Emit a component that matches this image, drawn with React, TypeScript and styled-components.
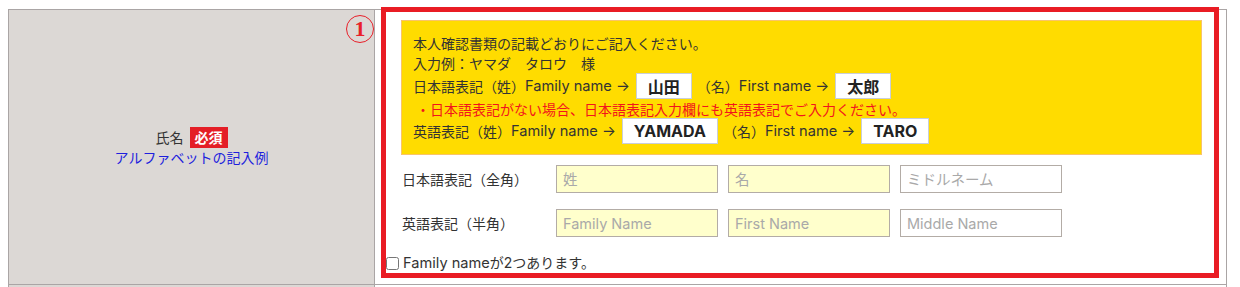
import styled, { createGlobalStyle } from 'styled-components';

const GlobalStyle = createGlobalStyle`
  body {
    margin: 0;
    background: #fff;
    color: #333;
    font-family: Inter, "Noto Sans CJK JP", sans-serif;
    font-size: 14px;
  }
`;

const Page = styled.div`
  padding: 9px 0 0 8px;
`;

const Table = styled.div`
  width: 1219px;
  box-sizing: border-box;
  border: 1px solid #aaa5a5;
  border-bottom: none;
`;

const Row = styled.div<{ $minHeight?: number }>`
  display: grid;
  grid-template-columns: 366px 1fr;
  border-bottom: 1px solid #aaa5a5;
  min-height: ${(p) => (p.$minHeight ? `${p.$minHeight}px` : 'auto')};
`;

const HeadCell = styled.div`
  position: relative;
  display: flex;
  flex-direction: column;
  align-items: center;
  justify-content: center;
  background: #dcd8d5;
  border-right: 1px solid #aaa5a5;
`;

const BodyCell = styled.div`
  position: relative;
  padding: 10px 7px 11px 7px;
`;

const NameLine = styled.div`
  display: flex;
  align-items: center;
  gap: 6px;
  height: 21px;
`;

const Required = styled.span`
  display: inline-block;
  height: 21px;
  line-height: 21px;
  padding: 0 5px;
  background: #e41e26;
  color: #fff;
  font-weight: 700;
`;

const SampleLink = styled.a`
  color: #1f1fdd;
  text-decoration: none;
  line-height: 20px;
`;

const Marker = styled.span`
  position: absolute;
  top: 5px;
  right: 0;
  width: 28px;
  height: 28px;
  box-sizing: border-box;
  border: 1.5px solid #e8202a;
  border-radius: 50%;
  display: flex;
  align-items: center;
  justify-content: center;
  color: #e8202a;
  font-family: "Liberation Serif", serif;
  font-weight: 700;
  font-size: 22px;
  line-height: 1;
`;

const Highlight = styled.div`
  position: absolute;
  left: 6px;
  top: -3px;
  width: 838px;
  height: 271px;
  box-sizing: border-box;
  border: 5px solid #e91c24;
  pointer-events: none;
`;

const Notice = styled.div`
  margin: 0 17px 0 19px;
  padding: 12px 12px 10px 11px;
  background: #ffdc00;
  border: 1px solid #f9c46a;
`;

const NoticeLine = styled.div<{ $h: number; $warn?: boolean }>`
  display: flex;
  align-items: center;
  height: ${(p) => p.$h}px;
  white-space: pre;
  color: ${(p) => (p.$warn ? '#f2141c' : '#333')};
  padding-left: ${(p) => (p.$warn ? '3px' : '0')};
`;

// latin runs read a little larger than the CJK text next to them
const Latin = styled.span`
  font-size: 14.6px;
`;

const NameBox = styled.span`
  display: inline-flex;
  align-items: center;
  height: 26px;
  box-sizing: border-box;
  padding: 0 11px;
  margin: 0 5px 0 6px;
  background: #fff;
  border: 1px solid #c9ced8;
  color: #222;
  font-size: 16px;
  font-weight: 700;
`;

const FormRow = styled.div<{ $top: number }>`
  display: flex;
  align-items: center;
  gap: 10px;
  margin-top: ${(p) => p.$top}px;
  padding-left: 20px;
`;

const FieldLabel = styled.span`
  width: 144px;
`;

const TextField = styled.input<{ $filled?: boolean }>`
  width: 162px;
  height: 28px;
  box-sizing: border-box;
  margin: 0;
  padding: 0 6px;
  border: 1px solid #b3aca6;
  border-radius: 0;
  background: ${(p) => (p.$filled ? '#ffffcc' : '#fff')};
  font-family: inherit;
  font-size: 14.5px;
  color: #333;
  outline: none;

  &::placeholder {
    color: #a9a9a9;
  }
`;

const CheckRow = styled.label`
  display: flex;
  align-items: center;
  margin-top: 16px;
  line-height: 20px;
  white-space: pre;
`;

const Check = styled.input`
  width: 13px;
  height: 13px;
  margin: 0 4px 0 4px;
`;

const App = () => {
  return (
    <Page>
      <GlobalStyle />
      <Table>
        <Row>
          <HeadCell>
            <Marker>1</Marker>
            <NameLine>
              <span>氏名</span>
              <Required>必須</Required>
            </NameLine>
            <SampleLink href="#">アルファベットの記入例</SampleLink>
          </HeadCell>
          <BodyCell>
            <Highlight />
            <Notice>
              <NoticeLine $h={20}>本人確認書類の記載どおりにご記入ください。</NoticeLine>
              <NoticeLine $h={20}>入力例：ヤマダ　タロウ　様</NoticeLine>
              <NoticeLine $h={26}>
                日本語表記（姓）<Latin>Family name →</Latin>
                <NameBox>山田</NameBox>（名）<Latin>First name →</Latin>
                <NameBox>太郎</NameBox>
              </NoticeLine>
              <NoticeLine $h={19} $warn>
                ・日本語表記がない場合、日本語表記入力欄にも英語表記でご入力ください。
              </NoticeLine>
              <NoticeLine $h={26}>
                英語表記（姓）<Latin>Family name →</Latin>
                <NameBox>YAMADA</NameBox>（名）<Latin>First name →</Latin>
                <NameBox>TARO</NameBox>
              </NoticeLine>
            </Notice>
            <FormRow $top={10}>
              <FieldLabel>日本語表記（全角）</FieldLabel>
              <TextField $filled placeholder="姓" />
              <TextField $filled placeholder="名" />
              <TextField placeholder="ミドルネーム" />
            </FormRow>
            <FormRow $top={16}>
              <FieldLabel>英語表記（半角）</FieldLabel>
              <TextField $filled placeholder="Family Name" />
              <TextField $filled placeholder="First Name" />
              <TextField placeholder="Middle Name" />
            </FormRow>
            <CheckRow>
              <Check type="checkbox" />
              <Latin>Family name</Latin>が2つあります。
            </CheckRow>
          </BodyCell>
        </Row>
        <Row $minHeight={40}>
          <HeadCell />
          <BodyCell />
        </Row>
      </Table>
    </Page>
  );
};

export default App;
